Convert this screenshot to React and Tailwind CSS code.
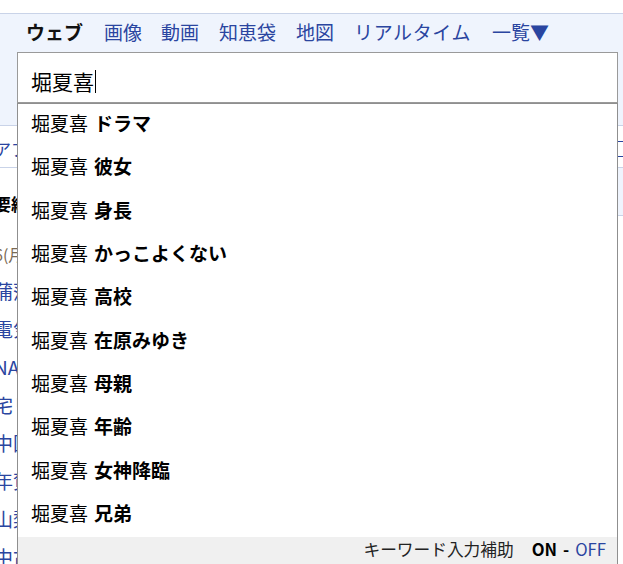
const FONT = { fontFamily: '"Noto Sans CJK JP", "Noto Sans", sans-serif' };

const tabs = [
  { label: 'ウェブ', cls: 'mr-[21px] font-bold text-[#111]' },
  { label: '画像', cls: 'mr-[19px] text-[#2a45a0]' },
  { label: '動画', cls: 'mr-[20px] text-[#2a45a0]' },
  { label: '知恵袋', cls: 'mr-[20px] text-[#2a45a0]' },
  { label: '地図', cls: 'mr-[20px] text-[#2a45a0]' },
  { label: 'リアルタイム', cls: 'mr-[21px] tracking-[0.6px] text-[#2a45a0]' },
  { label: '一覧▼', cls: 'text-[#2a45a0]' },
];

const suggestions = ['ドラマ', '彼女', '身長', 'かっこよくない', '高校', '在原みゆき', '母親', '年齢', '女神降臨', '兄弟'];

const bgLinks = ['蒲蒲蒲蒲', '電気電気', 'NANANA', '宅リ宅リ', '中国中国', '年賀年賀', '山梨山梨', '中古中古'];

export default function App() {
  return (
    <div className="relative h-[564px] w-[623px] overflow-hidden bg-white text-black" style={FONT}>
      <div className="h-[13px]" />

      {/* header */}
      <header className="h-[113px] border-y border-[#c9d3e8] bg-[#eff4fd]">
        <nav className="flex h-[38px] items-center pb-[3px] pl-[26px] text-[19px] leading-none">
          {tabs.map((t) => (
            <span key={t.label} className={t.cls}>
              {t.label}
            </span>
          ))}
        </nav>
        <div className="ml-[17px] mr-[5px] flex h-[51px] items-center border border-[#9a9a9a] bg-white pl-[13px] pt-[7px] text-[21px] leading-none">
          <span>堀夏喜</span>
          <span className="ml-[1px] h-[23px] w-px bg-black" />
        </div>
      </header>

      {/* page content behind the dropdown */}
      <div className="-ml-[6px]">
        <div className="flex h-[42px] items-center justify-between border-b border-[#c9d3e8] pt-[4px]">
          <span className="text-[17px] text-[#2a45a0]">アプリ</span>
          <span className="mr-[-8px] h-[16px] w-[14px] border border-[#2a45a0]" />
        </div>
        <div className="flex">
          <div className="flex-1">
            <div className="flex h-[72px] items-center text-[17px] font-bold">要約</div>
            <div className="flex h-[28px] items-center text-[16px] text-[#7a6a55]">6(月)</div>
            <div className="flex flex-col pt-[4px] text-[19px] text-[#2a45a0]">
              {bgLinks.map((l) => (
                <span key={l} className="h-[38px] leading-[38px]">
                  {l}
                </span>
              ))}
            </div>
          </div>
          <div className="h-[48px] w-[8px] border-b border-[#c9d3e8] bg-[#eff4fd]" />
        </div>
      </div>

      {/* suggest dropdown */}
      <div className="absolute left-[17px] right-[5px] top-[103px] h-[470px] border-x border-t border-[#8f8f8f] bg-white">
        <ul>
          {suggestions.map((s) => (
            <li key={s} className="flex h-[43.3px] items-center pb-[6px] pl-[13px] text-[19px] leading-none">
              <span>堀夏喜</span>
              <span className="ml-[6px] font-bold">{s}</span>
            </li>
          ))}
        </ul>
        <div className="flex h-[40px] items-start justify-end bg-[#f0f0f0] pr-[11px] pt-[1px] text-[16.7px] leading-[22px]">
          <span className="text-[#222]">キーワード入力補助</span>
          <span className="ml-[18px] font-bold">ON</span>
          <span className="mx-[6px] font-bold">-</span>
          <span className="text-[#2a45a0]">OFF</span>
        </div>
      </div>
    </div>
  );
}
